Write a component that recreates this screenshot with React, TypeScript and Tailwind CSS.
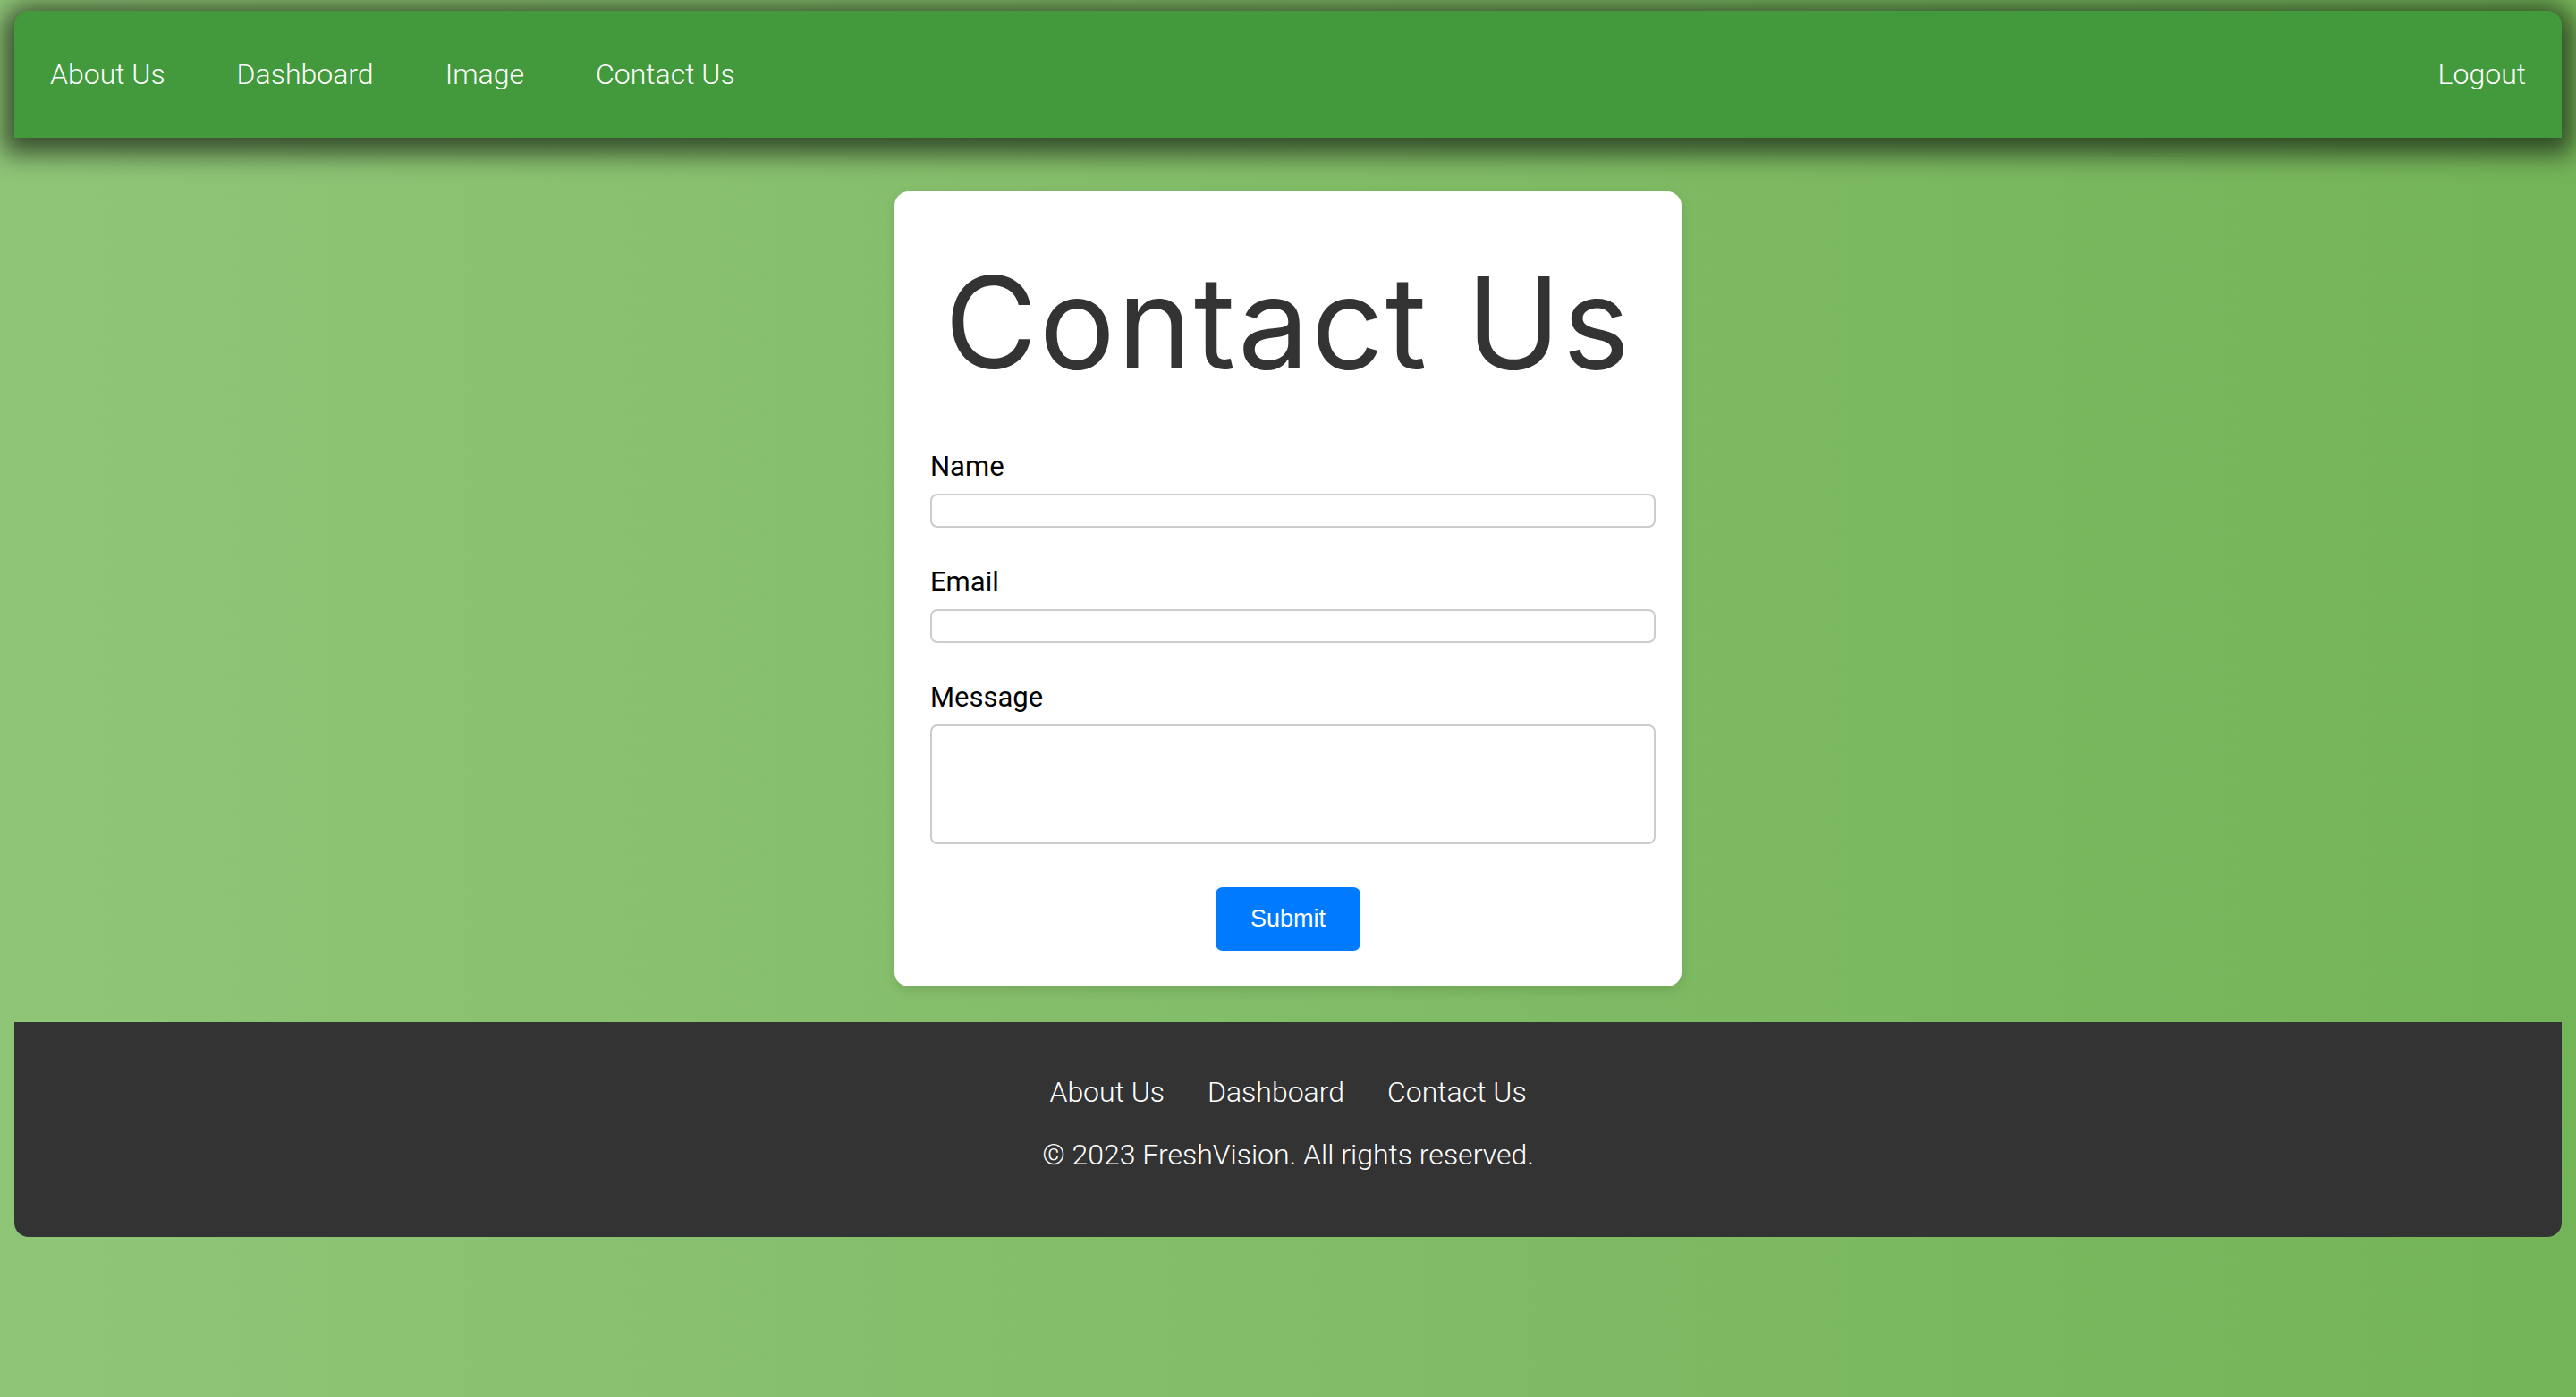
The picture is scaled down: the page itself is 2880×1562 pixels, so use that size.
import React from "react";

const navLinks = ["About Us", "Dashboard", "Image", "Contact Us"];
const footerLinks = ["About Us", "Dashboard", "Contact Us"];

function Field({ label, textarea }: { label: string; textarea?: boolean }) {
  return (
    <div className={textarea ? "" : "mb-[43px]"}>
      <label className="mb-3 block font-['Roboto',sans-serif] text-[31px] leading-[36px] text-black">
        {label}
      </label>
      {textarea ? (
        <textarea className="block h-[134px] w-[811px] resize-none rounded-lg border-2 border-[#cccccc] bg-white outline-none" />
      ) : (
        <input
          type="text"
          className="block h-[38px] w-[811px] rounded-lg border-2 border-[#cccccc] bg-white outline-none"
        />
      )}
    </div>
  );
}

export default function App() {
  return (
    <div className="min-h-screen overflow-hidden bg-[linear-gradient(to_right,#8fc577,#74b458)] pt-3">
      <nav className="mx-4 flex h-[142px] items-center justify-between rounded-t-2xl bg-[#429a3d] font-['Roboto_Light','Roboto',sans-serif] text-[32px] font-light text-white shadow-[0_6px_28px_12px_rgba(0,0,0,0.6)]">
        <div className="flex items-center">
          {navLinks.map((l) => (
            <a key={l} className="px-10 leading-[40px]">
              {l}
            </a>
          ))}
        </div>
        <a className="px-10 leading-[40px]">Logout</a>
      </nav>

      <main className="flex justify-center pt-[60px] pb-10">
        <div className="w-[880px] rounded-2xl bg-white p-10 shadow-[0_4px_14px_rgba(0,0,0,0.12)]">
          <h1 className="mt-[35px] mb-[73px] text-center font-['Inter',sans-serif] text-[142px] leading-none font-normal tracking-[2px] text-[#333333]">
            Contact Us
          </h1>
          <form onSubmit={(e) => e.preventDefault()}>
            <Field label="Name" />
            <Field label="Email" />
            <Field label="Message" textarea />
            <button
              type="submit"
              className="mx-auto mt-[48px] block h-[71px] w-[162px] rounded-lg bg-[#007bff] font-['Liberation_Sans',sans-serif] text-[27px] text-white"
            >
              Submit
            </button>
          </form>
        </div>
      </main>

      <footer className="mx-4 rounded-b-2xl bg-[#333333] pt-[58px] pb-[72px] text-center font-['Roboto_Light','Roboto',sans-serif] text-[32px] font-light text-white">
        <div className="flex justify-center gap-[48px] leading-[40px]">
          {footerLinks.map((l) => (
            <a key={l}>{l}</a>
          ))}
        </div>
        <p className="mt-[30px] leading-[40px]">© 2023 FreshVision. All rights reserved.</p>
      </footer>
    </div>
  );
}
